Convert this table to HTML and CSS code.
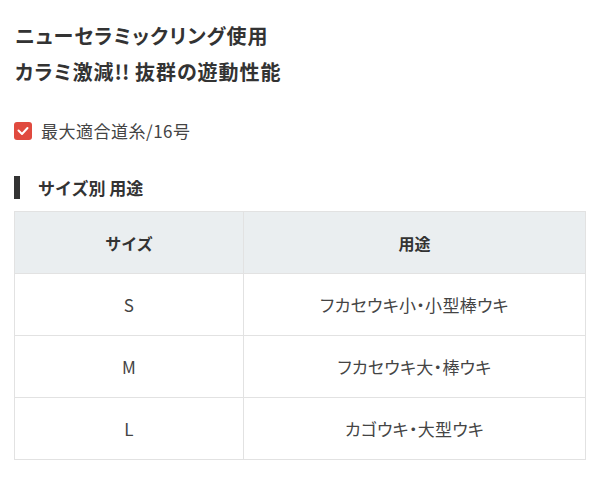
FILE: index.html
```html
<!DOCTYPE html>
<html lang="ja">
<head>
<meta charset="utf-8">
<link rel="stylesheet" href="styles.css">
</head>
<body>
<div class="page">
  <h1 class="title">ニューセラミックリング使用<br>カラミ激減<span class="bang">!!</span> 抜群の遊動性能</h1>
  <p class="check-item"><span class="checkbox"><svg width="12" height="10" viewBox="0 0 12 10"><path d="M1.5 4.5 L5 8 L10.5 2" fill="none" stroke="#fff" stroke-width="2" stroke-linecap="round" stroke-linejoin="round"/></svg></span>最大適合道糸/16号</p>
  <h2 class="section">サイズ別 用途</h2>
  <table class="spec">
    <thead>
      <tr><th class="c1">サイズ</th><th>用途</th></tr>
    </thead>
    <tbody>
      <tr><td>S</td><td>フカセウキ小・小型棒ウキ</td></tr>
      <tr><td>M</td><td>フカセウキ大・棒ウキ</td></tr>
      <tr><td>L</td><td>カゴウキ・大型ウキ</td></tr>
    </tbody>
  </table>
</div>
</body>
</html>
```
FILE: styles.css
```css
html, body {
  margin: 0;
  padding: 0;
  background: #fff;
}
body {
  font-family: "Noto Sans CJK JP", "Noto Sans", sans-serif;
  color: #333;
  font-feature-settings: "palt";
}
.page {
  padding: 18px 15px 0 14px;
}
.title {
  margin: 0;
  font-size: 20px;
  line-height: 36px;
  font-weight: 700;
  letter-spacing: 1px;
  color: #333;
  padding-left: 1px;
}
.bang {
  letter-spacing: 0;
}
.check-item {
  margin: 29px 0 0 0;
  display: flex;
  align-items: center;
  font-size: 17px;
  line-height: 24px;
  letter-spacing: 0.5px;
  color: #444;
}
.checkbox {
  width: 18px;
  height: 18px;
  border-radius: 3px;
  background: #e04a3f;
  display: inline-flex;
  align-items: center;
  justify-content: center;
  margin-right: 9px;
}
.section {
  margin: 33px 0 0 0;
  border-left: 6px solid #333;
  padding-left: 18px;
  font-size: 17px;
  line-height: 23px;
  font-weight: 700;
  color: #333;
  font-feature-settings: normal;
}
.spec {
  margin-top: 12px;
  width: 572px;
  border-collapse: collapse;
  font-size: 17px;
  letter-spacing: 0.3px;
  color: #444;
}
.spec th, .spec td {
  border: 1px solid #e2e2e2;
  height: 61px;
  padding: 0;
  text-align: center;
  font-weight: 400;
}
.spec th {
  background: #eaeef0;
  font-weight: 700;
  font-size: 16px;
  letter-spacing: 0;
  color: #333;
  font-feature-settings: normal;
}
.spec .c1 {
  width: 228px;
}
```
